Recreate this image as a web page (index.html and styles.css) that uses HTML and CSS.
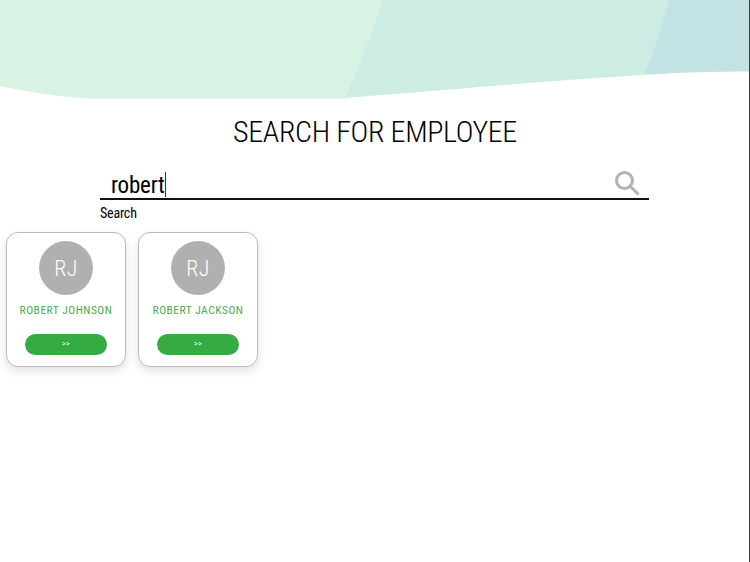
FILE: index.html
```html
<!DOCTYPE html>
<html lang="en">
<head>
<meta charset="utf-8">
<title>Search for employee</title>
<link rel="stylesheet" href="styles.css">
</head>
<body>
<svg class="waves" viewBox="0 0 750 100" width="750" height="100" aria-hidden="true">
  <path class="w3" d="M640 0H750V71.500C715 71.500 680 72.500 640 75Z"/>
  <path class="w2" d="M382 0H669C661 30 653 55 644 75C540 81 440 91 344 98C358 65 372 30 382 0Z"/>
  <path class="w1" d="M0 0H383C373 33 358 68 345 98.500H90C55 97 25 91 0 86Z"/>
</svg>
<div class="edge"></div>
<main class="page">
  <h1 class="title">SEARCH FOR EMPLOYEE</h1>
  <section class="search">
    <div class="field">
      <span class="query">robert</span><span class="caret"></span>
      <svg class="glass" viewBox="0 0 24 24" width="24" height="24" aria-hidden="true">
        <circle cx="9.500" cy="9.500" r="8"/>
        <path d="M15.500 15.500L22.500 22.500"/>
      </svg>
    </div>
    <div class="label">Search</div>
  </section>
  <section class="cards">
    <article class="card">
      <div class="avatar">RJ</div>
      <div class="name">ROBERT JOHNSON</div>
      <div class="go">&gt;&gt;</div>
    </article>
    <article class="card">
      <div class="avatar">RJ</div>
      <div class="name">ROBERT JACKSON</div>
      <div class="go">&gt;&gt;</div>
    </article>
  </section>
</main>
</body>
</html>
```

FILE: styles.css
```css
html, body {
  margin: 0;
  padding: 0;
  background: #fff;
}
body {
  width: 750px;
  height: 562px;
  overflow: hidden;
  position: relative;
  font-family: Roboto, "Liberation Sans", sans-serif;
  color: #000;
}
.waves {
  position: absolute;
  left: 0;
  top: 0;
  display: block;
}
.w1 { fill: #d8f3e4; }
.w2 { fill: #cdece4; }
.w3 { fill: #c3e2e3; }
.edge {
  position: absolute;
  right: 0;
  top: 0;
  width: 1px;
  height: 562px;
  background: #3a3f40;
}
.page {
  position: relative;
  padding-top: 114px;
}
.title {
  margin: 0;
  height: 36px;
  font-size: 30px;
  line-height: 36px;
  font-weight: 300;
  text-align: center;
  font-stretch: condensed;
  letter-spacing: -0.34px;
}
.search {
  margin: 19px 101px 0 100px;
}
.field {
  height: 29px;
  border-bottom: 2px solid #111;
  display: flex;
  align-items: center;
  padding-left: 11px;
  padding-right: 10px;
}
.query {
  font-size: 23px;
  line-height: 29px;
  padding-top: 3px;
  font-stretch: condensed;
  letter-spacing: -0.2px;
}
.caret {
  width: 1px;
  height: 25px;
  margin-top: 1px;
  background: #333;
}
.glass {
  margin-left: auto;
  margin-bottom: 2px;
  fill: none;
  stroke: #b3b3b3;
  stroke-width: 3;
  stroke-linecap: round;
}
.label {
  margin-top: 4px;
  font-size: 14px;
  line-height: 18px;
  font-stretch: condensed;
  letter-spacing: -0.2px;
}
.cards {
  display: flex;
  gap: 12px;
  margin: 10px 0 0 6px;
}
.card {
  box-sizing: border-box;
  width: 120px;
  height: 135px;
  border: 1px solid #bbb;
  border-radius: 12px;
  background: #fff;
  box-shadow: 0 4px 10px rgba(0, 0, 0, 0.12);
  display: flex;
  flex-direction: column;
  align-items: center;
  padding-top: 8px;
}
.avatar {
  width: 54px;
  height: 54px;
  border-radius: 50%;
  background: #b0b0b0;
  color: #fff;
  display: flex;
  align-items: center;
  justify-content: center;
  font-size: 22px;
  font-weight: 300;
  font-stretch: condensed;
  letter-spacing: 0.5px;
}
.name {
  margin-top: 8px;
  font-size: 11.500px;
  line-height: 14px;
  color: #4aad54;
  font-stretch: condensed;
  letter-spacing: 0.5px;
  white-space: nowrap;
}
.go {
  margin-top: 17px;
  width: 82px;
  height: 21px;
  border-radius: 11px;
  background: #36ab41;
  color: #fff;
  font-size: 7px;
  line-height: 21px;
  letter-spacing: 0.4px;
  text-align: center;
}
```
